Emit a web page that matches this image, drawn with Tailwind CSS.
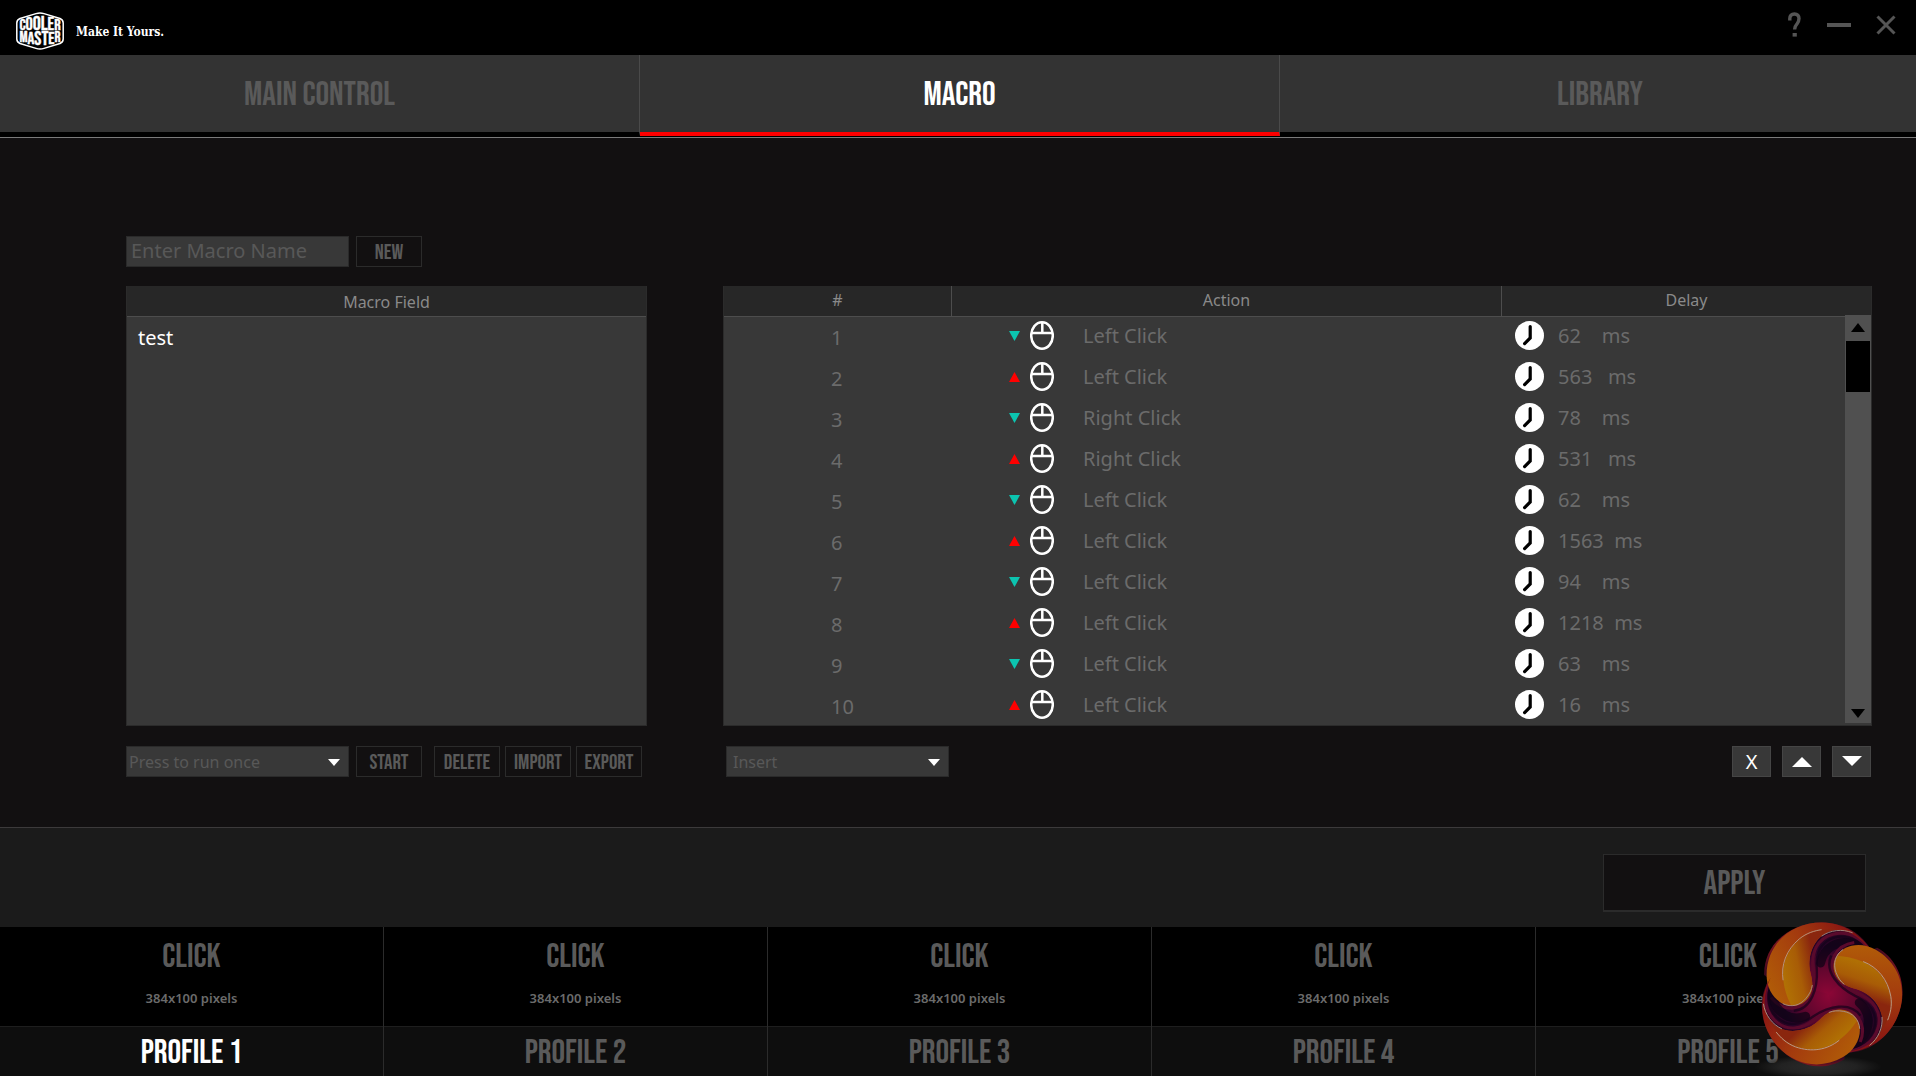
<!DOCTYPE html>
<html lang="en">
<head>
    <meta charset="UTF-8">
    <meta name="viewport" content="width=device-width, initial-scale=1.0">
    <title>Cooler Master - Macro</title>
    <script src="https://cdn.jsdelivr.net/npm/@tailwindcss/browser@4"></script>
</head>
<body class="bg-[#121011] text-[#6b6b6b] font-['Noto_Sans',sans-serif] min-h-screen flex flex-col overflow-x-hidden">

    <!-- Title bar -->
    <header class="h-[55px] bg-black flex items-center justify-between pl-4 pr-5">
        <div class="flex items-center gap-3 pt-1.5">
            <svg class="w-12 h-[38px]" viewBox="0 0 48 38" role="img" aria-label="Cooler Master">
                <path d="M4 6.5 L20 1.6 Q24 .4 28 1.6 L44 6.5 Q47.2 7.8 47.2 11 V27 Q47.2 30.2 44 31.5 L28 36.4 Q24 37.6 20 36.4 L4 31.5 Q.8 30.2 .8 27 V11 Q.8 7.8 4 6.5Z" fill="none" stroke="#fff" stroke-width="1.5"/>
                <g fill="#fff" stroke="#fff" stroke-width=".4" font-family="'Bebas Neue', 'Roboto Condensed', sans-serif" text-anchor="middle">
                    <text x="24" y="18" font-size="16"><tspan>C</tspan><tspan font-size="18">O</tspan><tspan font-size="20">O</tspan><tspan font-size="20">L</tspan><tspan font-size="18">E</tspan><tspan font-size="16">R</tspan></text>
                    <text x="24" y="30" font-size="15"><tspan>M</tspan><tspan font-size="17" dy="2">A</tspan><tspan font-size="19" dy="1">S</tspan><tspan font-size="19">T</tspan><tspan font-size="17" dy="-1">E</tspan><tspan font-size="15" dy="-2">R</tspan></text>
                </g>
            </svg>
            <span class="pt-0.5 font-['DejaVu_Serif_Condensed',serif] font-bold text-xs text-white">Make It Yours.</span>
        </div>
        <div class="flex items-center gap-6 pb-1.5">
            <button type="button" aria-label="Help">
                <svg class="w-[15px] h-[26px]" viewBox="0 0 15 26"><path d="M2.8 8.6 V6.6 Q2.8 2 7.4 2 Q12 2 12 6.6 Q12 9.4 10 11.8 Q7.6 14.4 7.6 17.6" fill="none" stroke="#555" stroke-width="3.4"/><rect x="5.6" y="21" width="4.2" height="3.6" fill="#555"/></svg>
            </button>
            <button type="button" aria-label="Minimize">
                <svg class="w-[26px] h-5" viewBox="0 0 26 20"><rect x="1" y="8" width="24" height="4" fill="#555"/></svg>
            </button>
            <button type="button" aria-label="Close">
                <svg class="w-5 h-5" viewBox="0 0 20 20"><path d="M1.5 1.5 L18.5 18.5 M18.5 1.5 L1.5 18.5" stroke="#555" stroke-width="3"/></svg>
            </button>
        </div>
    </header>

    <!-- Tabs -->
    <nav class="grid grid-cols-3 -mr-1 bg-black border-b border-[#7a7a7a] pb-px font-['Bebas_Neue','Roboto_Condensed',sans-serif] text-[34px] leading-9 text-[#5a5a5a]">
        <button type="button" class="h-[81px] bg-[#333] border-b-4 border-b-black border-r border-r-[#4a4a4a] pt-0.5">MAIN CONTROL</button>
        <button type="button" class="h-[81px] bg-[#333] border-b-4 border-b-[#f00] border-r border-r-[#4a4a4a] pt-0.5 text-white">MACRO</button>
        <button type="button" class="h-[81px] bg-[#333] border-b-4 border-b-black pt-0.5">LIBRARY</button>
    </nav>

    <main class="flex-1 grid grid-cols-[521fr_1149fr] gap-x-[76px] content-start pt-[98px] pl-[126px] pr-11 pb-[50px]">
        <div class="col-span-2 flex gap-[7px] mb-[19px]">
            <input type="text" aria-label="Macro name" placeholder="Enter Macro Name" class="w-[223px] h-[31px] px-1 pb-0.5 bg-[#383838] border border-[#2a2a2a] text-xl text-white placeholder:text-[#585858]">
            <button type="button" class="w-[66px] h-[31px] pt-0.5 border border-[#2b2b2b] font-['Bebas_Neue','Roboto_Condensed',sans-serif] text-[21px] leading-6 text-[#5a5a5a]">NEW</button>
        </div>

        <!-- Macro list -->
        <section class="h-[440px] bg-[#383838] border border-[#2b2b2b] border-t-0">
            <h2 class="h-[31px] bg-[#272727] border-b border-[#4d4d4d] text-center text-base leading-8 text-[#8a8a8a]">Macro Field</h2>
            <ul class="pt-[7px]">
                <li><button type="button" class="w-full px-[11px] text-left text-xl text-white">test</button></li>
            </ul>
        </section>

        <!-- Recorded actions -->
        <section class="relative h-[440px] overflow-hidden bg-[#383838] border border-[#2b2b2b] border-t-0">
            <table class="w-full table-fixed border-separate border-spacing-0">
                <colgroup>
                    <col class="w-[228px]">
                    <col>
                    <col class="w-[369px]">
                </colgroup>
                <thead class="bg-[#272727] text-base text-[#8a8a8a]">
                    <tr class="h-[31px]">
                        <th class="p-0 pb-0.5 font-normal border-b border-r border-[#4d4d4d]">#</th>
                        <th class="p-0 pb-0.5 font-normal border-b border-r border-[#4d4d4d]">Action</th>
                        <th class="p-0 pb-0.5 font-normal border-b border-[#4d4d4d]">Delay</th>
                    </tr>
                </thead>
                <tbody id="actionRows" class="text-xl"></tbody>
            </table>

            <div class="absolute top-[29px] right-0 w-[26px] h-[408px] bg-[#505050] px-px flex flex-col">
                <button type="button" class="h-[26px] pb-0.5 flex items-center justify-center" aria-label="Scroll up">
                    <svg class="w-3.5 h-[9px]" viewBox="0 0 14 9"><path d="M0 9 L7 0 L14 9Z"/></svg>
                </button>
                <div class="h-[51px] bg-black"></div>
                <button type="button" class="h-[24px] pt-1 mt-auto flex items-center justify-center" aria-label="Scroll down">
                    <svg class="w-3.5 h-[9px]" viewBox="0 0 14 9"><path d="M0 0 L7 9 L14 0Z"/></svg>
                </button>
            </div>
        </section>

        <div class="flex mt-5">
            <div class="relative">
                <select aria-label="Playback mode" class="appearance-none w-[223px] h-[31px] pl-0.5 pt-px bg-[#383838] border border-[#2a2a2a] text-base text-[#585858]">
                    <option>Press to run once</option>
                </select>
                <svg class="absolute right-[9px] top-[13px] w-3 h-[7px] pointer-events-none" viewBox="0 0 12 7"><path d="M0 0 L6 7 L12 0Z" fill="#fff"/></svg>
            </div>
            <div class="flex gap-[5px] font-['Bebas_Neue','Roboto_Condensed',sans-serif] text-[21px] leading-6 text-[#5a5a5a]">
                <button type="button" class="w-[66px] h-[31px] pt-0.5 mx-[7px] border border-[#2b2b2b]">START</button>
                <button type="button" class="w-[66px] h-[31px] pt-0.5 border border-[#2b2b2b]">DELETE</button>
                <button type="button" class="w-[66px] h-[31px] pt-0.5 border border-[#2b2b2b]">IMPORT</button>
                <button type="button" class="w-[66px] h-[31px] pt-0.5 border border-[#2b2b2b]">EXPORT</button>
            </div>
        </div>

        <div class="flex justify-between mt-5 pl-[3px] pr-px">
            <div class="relative">
                <select aria-label="Insert" class="appearance-none w-[223px] h-[31px] pl-1.5 bg-[#383838] border border-[#2a2a2a] text-base text-[#585858]">
                    <option>Insert</option>
                </select>
                <svg class="absolute right-[9px] top-[13px] w-3 h-[7px] pointer-events-none" viewBox="0 0 12 7"><path d="M0 0 L6 7 L12 0Z" fill="#fff"/></svg>
            </div>
            <div class="flex gap-[11px] text-white">
                <button type="button" class="w-[39px] h-[31px] bg-[#383838] border border-[#454545] text-xl leading-7" aria-label="Remove action">X</button>
                <button type="button" class="w-[39px] h-[31px] bg-[#383838] border border-[#454545] flex items-center justify-center" aria-label="Move up">
                    <svg class="w-5 h-2.5" viewBox="0 0 20 10"><path d="M0 10 L10 0 L20 10Z" fill="#fff"/></svg>
                </button>
                <button type="button" class="w-[39px] h-[31px] pb-0.5 bg-[#383838] border border-[#454545] flex items-center justify-center" aria-label="Move down">
                    <svg class="w-5 h-2.5" viewBox="0 0 20 10"><path d="M0 0 L10 10 L20 0Z" fill="#fff"/></svg>
                </button>
            </div>
        </div>
    </main>

    <div class="h-[100px] shrink-0 flex items-start justify-end pt-[26px] pr-[50px] bg-[#1b1b1b] border-t border-[#3c3a3b]">
        <button type="button" class="w-[263px] h-[58px] pt-0.5 bg-[#121011] border border-b-2 border-[#2b2b2b] font-['Bebas_Neue','Roboto_Condensed',sans-serif] text-[34px] leading-9 text-[#5a5a5a]">APPLY</button>
    </div>

    <!-- Profiles -->
    <footer class="relative bg-black">
        <div id="profiles" class="grid grid-cols-5 -mr-1"></div>

        <svg class="absolute right-3 -bottom-1 w-[151px] h-[161px] pointer-events-none" viewBox="126 62 438 468" aria-hidden="true">
            <defs>
                <radialGradient id="core" gradientUnits="userSpaceOnUse" cx="340" cy="280" r="210">
                    <stop offset="0" stop-color="#8c0636"/>
                    <stop offset=".4" stop-color="#5c062d"/>
                    <stop offset=".65" stop-color="#260428"/>
                    <stop offset=".86" stop-color="#2a0520"/>
                    <stop offset="1" stop-color="#7a1420"/>
                </radialGradient>
                <linearGradient id="outer" gradientUnits="userSpaceOnUse" x1="165" y1="240" x2="420" y2="100">
                    <stop offset="0" stop-color="#b05a08"/>
                    <stop offset=".5" stop-color="#a33a0e"/>
                    <stop offset="1" stop-color="#861212"/>
                </linearGradient>
                <linearGradient id="inner" gradientUnits="userSpaceOnUse" x1="210" y1="210" x2="305" y2="190">
                    <stop offset="0" stop-color="#b07004"/>
                    <stop offset=".5" stop-color="#a85c06"/>
                    <stop offset="1" stop-color="#8a260e"/>
                </linearGradient>
                <radialGradient id="shade">
                    <stop offset="0" stop-color="#2b2b2b"/>
                    <stop offset=".6" stop-color="#222"/>
                    <stop offset="1" stop-color="#222" stop-opacity="0"/>
                </radialGradient>
                <g id="base">
                    <path d="M345 280 L470 158 C445 102 385 72 325 72 C235 72 156 135 158 225 L177 240Z"/>
                </g>
                <g id="groove">
                    <path d="M448 152 C418 124 382 126 356 140 C336 152 326 168 322 190" fill="none" stroke="#0b0314" stroke-width="26" stroke-opacity=".7" stroke-linecap="round"/>
                    <path d="M466 154 C430 104 392 98 358 106 C312 118 294 160 300 208 C306 252 294 316 240 321 C214 322 192 308 178 290" fill="none" stroke="#5a0a2c" stroke-width="9"/>
                    <path d="M462 158 C425 114 392 108 362 116 C322 128 306 164 311 210 C314 262 296 324 244 329" fill="none" stroke="#12031a" stroke-width="7" stroke-opacity=".7"/>
                </g>
                <g id="arm">
                    <path d="M470 158 C440 105 385 72 325 72 C235 72 165 135 165 225 C165 275 200 315 240 315 C275 315 298 285 298 255 C298 225 286 210 290 180 C295 135 325 97 370 94 C410 95 445 122 470 158Z" fill="url(#outer)"/>
                    <path d="M236 312 C210 262 200 196 240 143 C270 106 310 90 368 92 C325 97 295 135 290 180 C286 210 298 225 298 255 C298 285 275 312 236 312Z" fill="url(#inner)"/>
                    <path d="M213 240 C206 196 222 152 260 120 C282 102 305 96 325 93" fill="none" stroke="#b8a08a" stroke-width="2.5"/>
                    <path d="M212 308 C236 320 262 314 280 292 C290 280 296 268 298 254" fill="none" stroke="#a89088" stroke-width="2.5"/>
                    <path d="M325 112 C350 94 385 90 415 102" fill="none" stroke="#a89088" stroke-width="2.5"/>
                </g>
            </defs>
            <ellipse cx="315" cy="492" rx="185" ry="34" fill="url(#shade)"/>
            <g fill="url(#core)">
                <circle cx="345" cy="280" r="176"/>
                <use href="#base"/>
                <use href="#base" transform="rotate(120 345 280)"/>
                <use href="#base" transform="rotate(240 345 280)"/>
            </g>
            <use href="#groove"/>
            <use href="#groove" transform="rotate(120 345 280)"/>
            <use href="#groove" transform="rotate(240 345 280)"/>
            <use href="#arm"/>
            <use href="#arm" transform="rotate(120 345 280)"/>
            <use href="#arm" transform="rotate(240 345 280)"/>
        </svg>
    </footer>

    <script>
        const actions = [
            { dir: 'down', name: 'Left Click', delay: 62 },
            { dir: 'up', name: 'Left Click', delay: 563 },
            { dir: 'down', name: 'Right Click', delay: 78 },
            { dir: 'up', name: 'Right Click', delay: 531 },
            { dir: 'down', name: 'Left Click', delay: 62 },
            { dir: 'up', name: 'Left Click', delay: 1563 },
            { dir: 'down', name: 'Left Click', delay: 94 },
            { dir: 'up', name: 'Left Click', delay: 1218 },
            { dir: 'down', name: 'Left Click', delay: 63 },
            { dir: 'up', name: 'Left Click', delay: 16 }
        ];

        const arrows = {
            down: '<path d="M0 0 L5.5 10 L11 0Z" fill="#0cc4b0"/>',
            up: '<path d="M0 10 L5.5 0 L11 10Z" fill="#f00"/>'
        };

        document.getElementById('actionRows').innerHTML = actions.map((action, index) => `
            <tr class="h-[41px]">
                <td class="p-0 pl-[107px]">${index + 1}</td>
                <td class="p-0 pl-[57px]">
                    <div class="flex items-center pb-1">
                        <svg class="w-[11px] h-2.5" viewBox="0 0 11 10">${arrows[action.dir]}</svg>
                        <svg class="w-6 h-[29px] ml-2.5" viewBox="0 0 24 29" fill="none" stroke="#fff">
                            <ellipse cx="12" cy="14.5" rx="10.8" ry="13.2" stroke-width="2.5"/>
                            <path d="M1.5 12 H22.5 M12.3 1.5 V12" stroke-width="2.5"/>
                        </svg>
                        <span class="ml-[29px]">${action.name}</span>
                    </div>
                </td>
                <td class="p-0 pl-[13px]">
                    <div class="flex items-center gap-3.5 pb-1">
                        <svg class="w-[29px] h-[29px]" viewBox="0 0 29 29">
                            <circle cx="14.5" cy="14.5" r="14.5" fill="#fff"/>
                            <path d="M15.2 5.5 V17 L9.6 22.6" fill="none" stroke="#000" stroke-width="3.2" stroke-linecap="round"/>
                        </svg>
                        <span class="whitespace-pre">${String(action.delay).padEnd(6)}ms</span>
                    </div>
                </td>
            </tr>
        `).join('');

        const active = 1;
        document.getElementById('profiles').innerHTML = [1, 2, 3, 4, 5].map(n => `
            <div class="text-center border-r border-[#2b2b2b] last:border-r-0 text-[#5a5a5a]">
                <button type="button" class="w-full h-[99px] pt-1 flex flex-col items-center">
                    <span class="mt-2 font-['Bebas_Neue','Roboto_Condensed',sans-serif] text-[34px] leading-9">CLICK</span>
                    <span class="mt-[13px] text-[13px] leading-5 font-semibold text-[#6b6b6b]">384x100 pixels</span>
                </button>
                <button type="button" class="w-full h-[50px] pt-0.5 bg-[#0e0e0e] border-t border-[#1e1e1e] font-['Bebas_Neue','Roboto_Condensed',sans-serif] text-[34px] leading-9 ${n === active ? 'text-white' : 'text-[#5a5a5a]'}">PROFILE ${n}</button>
            </div>
        `).join('');
    </script>
</body>
</html>
